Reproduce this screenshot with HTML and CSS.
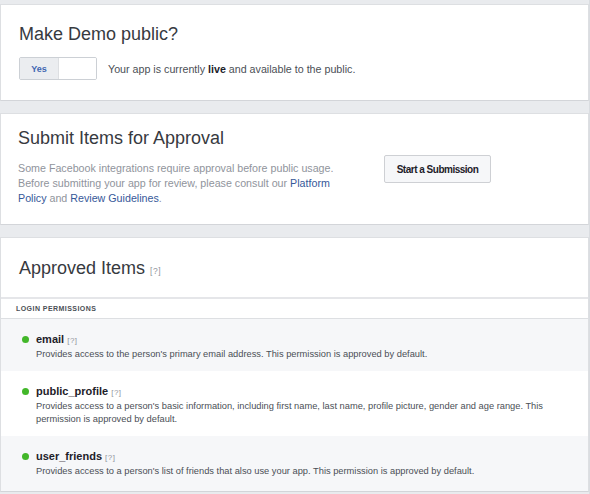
FILE: index.html
```html
<!DOCTYPE html>
<html lang="en">
<head>
<meta charset="UTF-8">
<title>App Review</title>
<link rel="stylesheet" href="styles.css">
</head>
<body>
<div class="page">
  <section class="card card-public">
    <h2 class="card-title">Make Demo public?</h2>
    <div class="public-row">
      <div class="toggle"><span class="toggle-on">Yes</span><span class="toggle-off"></span></div>
      <p class="public-text">Your app is currently <b>live</b> and available to the public.</p>
    </div>
  </section>

  <section class="card card-submit">
    <div class="submit-text">
      <h2 class="card-title">Submit Items for Approval</h2>
      <p class="muted">Some Facebook integrations require approval before public usage. Before submitting your app for review, please consult our <a href="#">Platform Policy</a> and <a href="#">Review Guidelines</a>.</p>
    </div>
    <button class="btn">Start a Submission</button>
  </section>

  <section class="card card-approved">
    <div class="approved-head">
      <h2 class="card-title">Approved Items <span class="help">[?]</span></h2>
    </div>
    <div class="perm-label">Login Permissions</div>
    <ul class="perm-list">
      <li class="perm">
        <div class="perm-name"><span class="dot"></span>email <span class="help">[?]</span></div>
        <p class="perm-desc">Provides access to the person's primary email address. This permission is approved by default.</p>
      </li>
      <li class="perm">
        <div class="perm-name"><span class="dot"></span>public_profile <span class="help">[?]</span></div>
        <p class="perm-desc">Provides access to a person's basic information, including first name, last name, profile picture, gender and age range. This permission is approved by default.</p>
      </li>
      <li class="perm">
        <div class="perm-name"><span class="dot"></span>user_friends <span class="help">[?]</span></div>
        <p class="perm-desc">Provides access to a person's list of friends that also use your app. This permission is approved by default.</p>
      </li>
    </ul>
  </section>
</div>
</body>
</html>
```

FILE: styles.css
```css
*,*::before,*::after{margin:0;padding:0;box-sizing:border-box}
body{font-family:"Liberation Sans",Arial,Helvetica,sans-serif;background:#e9ebee;color:#4b4f56}
.page{width:590px;padding-top:4px;border-right:1px solid #dadde1;min-height:494px}
.card{background:#fff;border:1px solid #dddfe2;border-bottom-color:#d3d5d9;margin-bottom:12px}
.card-title{font-size:18px;line-height:22px;font-weight:normal;color:#373a3f}
.card-public{padding:18px 18px 20px}
.card-public .card-title{margin-bottom:12px}
.public-row{display:flex;align-items:center;gap:11px}
.toggle{display:flex;width:78px;height:23px;border:1px solid #ccd0d5;border-radius:2px;overflow:hidden}
.toggle-on{width:39px;background:#ebedf0;border-right:1px solid #dddfe2;color:#4267b2;font-weight:bold;font-size:9px;display:flex;align-items:center;justify-content:center}
.toggle-off{flex:1;background:#fff}
.public-text{font-size:10.7px;color:#4b4f56}
.public-text b{color:#1d2129}
.card-submit{display:flex;align-items:flex-start;gap:30px;padding:13px 18px 18px 17px}
.submit-text{width:336px}
.submit-text .card-title{margin-bottom:12px}
.muted{font-size:10.7px;line-height:15px;color:#90949c}
.muted a{color:#365899;text-decoration:none}
.btn{margin-top:28px;width:107px;height:28px;background:#f6f7f9;border:1px solid #ced0d4;border-radius:2px;font-family:inherit;font-weight:bold;font-size:10px;letter-spacing:-.5px;color:#1d2129}
.card-approved{margin-bottom:0}
.approved-head{height:59px;padding:19px 18px 0}
.help{font-size:8px;line-height:0;color:#90949c;letter-spacing:.5px}
.card-title .help{font-size:8.5px;margin-left:0}
.perm-label{height:22px;border-top:2px solid #e5e6e9;border-bottom:1px solid #dddfe2;padding:0 15px;font-size:7px;line-height:19px;font-weight:bold;text-transform:uppercase;letter-spacing:.45px;color:#4b4f56}
.perm-list{list-style:none}
.perm{padding:13px 30px 10px 35px}
.perm:nth-child(odd){background:#f6f7f9}
.perm:last-child{padding-bottom:13px}
.perm-name{position:relative;font-size:11px;line-height:14px;font-weight:bold;color:#1d2129}
.perm-name .help{font-weight:normal}
.dot{position:absolute;left:-14px;top:4px;width:7px;height:7px;border-radius:50%;background:#42b72a}
.perm-desc{margin-top:2px;font-size:9.3px;line-height:13px;color:#4b4f56}
```
